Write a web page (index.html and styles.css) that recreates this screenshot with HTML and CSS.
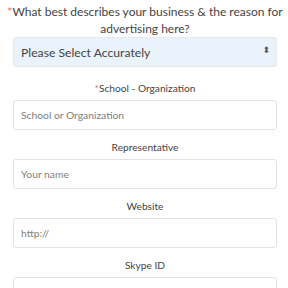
FILE: index.html
```html
<!DOCTYPE html>
<html lang="en">
<head>
  <meta charset="UTF-8">
  <title>Advertise</title>
  <link rel="stylesheet" href="styles.css">
</head>
<body>
  <form class="ad-form">
    <p class="question"><span class="req">*</span>What best describes your business &amp; the reason for advertising here?</p>
    <div class="select-wrap">
      <select class="field select-field">
        <option>Please Select Accurately</option>
      </select>
      <span class="arrows">&#x2B0D;</span>
    </div>

    <div class="group first">
      <label><span class="req">*</span>School - Organization</label>
      <input class="field" type="text" placeholder="School or Organization">
    </div>
    <div class="group">
      <label>Representative</label>
      <input class="field" type="text" placeholder="Your name">
    </div>
    <div class="group">
      <label>Website</label>
      <input class="field" type="text" placeholder="http://">
    </div>
    <div class="group">
      <label>Skype ID</label>
      <input class="field" type="text">
    </div>
  </form>
</body>
</html>
```

FILE: styles.css
```css
body {
  margin: 0;
  background: #fff;
  font-family: Lato, "Open Sans", sans-serif;
  color: #444;
}
.ad-form {
  padding: 0 11px 0 13px;
}
.question {
  margin: 0 -8px;
  padding-top: 3px;
  font-size: 12px;
  line-height: 17px;
  text-align: center;
  color: #444;
}
.req {
  color: #e06666;
}
.select-wrap {
  position: relative;
}
.field {
  display: block;
  box-sizing: border-box;
  width: 100%;
  height: 30px;
  margin: 0;
  padding: 0 7px;
  border: 1px solid #e3e3e3;
  border-radius: 3px;
  background: #fff;
  font-family: inherit;
  font-size: 10.3px;
  color: #444;
}
.field::placeholder {
  color: #808080;
}
.select-field {
  appearance: none;
  -webkit-appearance: none;
  background: #eaf3fc;
  border-color: #e2ebf3;
  font-size: 12.2px;
  color: #444;
}
.arrows {
  position: absolute;
  right: 7px;
  top: 8px;
  font-size: 9px;
  color: #555;
  font-family: "DejaVu Sans", sans-serif;
}
.group {
  margin-top: 8px;
}
.group.first {
  margin-top: 12px;
}
.group label {
  display: block;
  margin-bottom: 3px;
  font-size: 10.2px;
  line-height: 18px;
  text-align: center;
}
```
